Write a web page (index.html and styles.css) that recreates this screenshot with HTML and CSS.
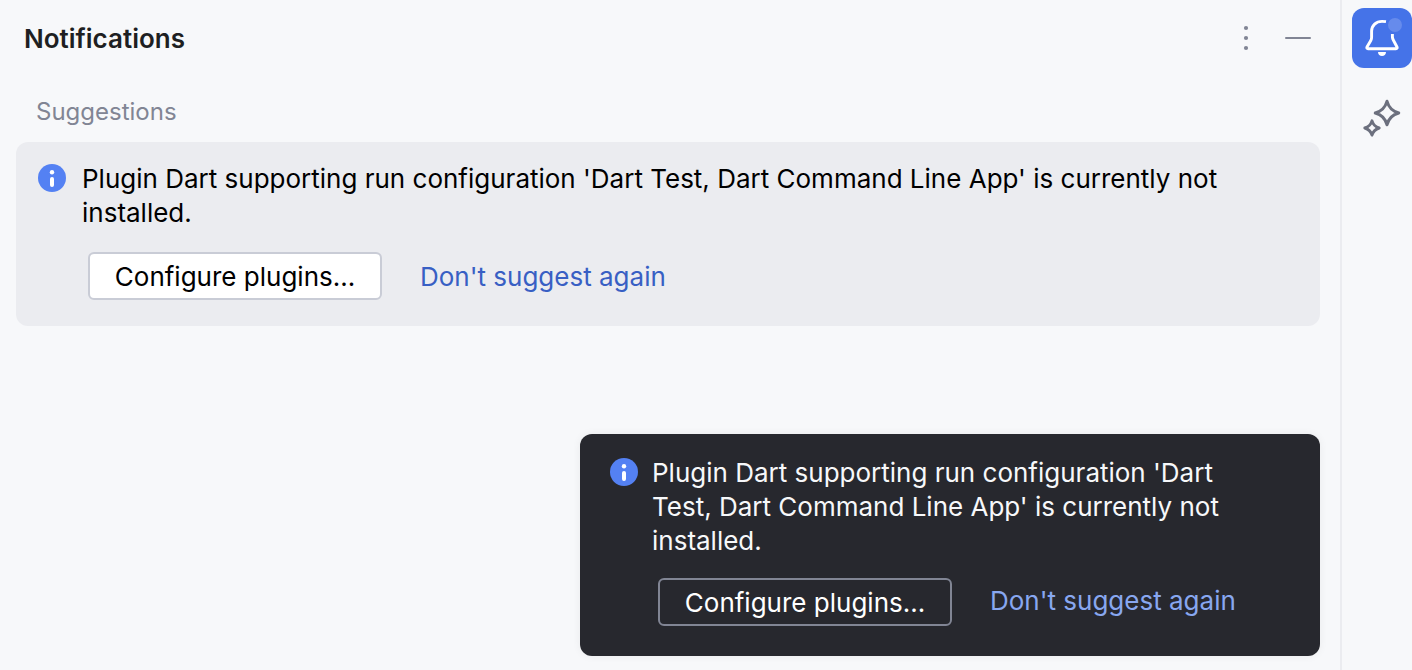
FILE: index.html
```html
<!DOCTYPE html>
<html lang="en">
<head>
    <meta charset="UTF-8">
    <meta name="viewport" content="width=device-width, initial-scale=1.0">
    <title>Notifications</title>
    <link rel="stylesheet" href="styles.css">
</head>
<body>
    <main class="panel">
        <header class="panel-header">
            <h1>Notifications</h1>
            <div class="panel-actions">
                <button type="button" class="icon-btn" aria-label="Options">
                    <svg width="32" height="32" viewBox="0 0 32 32" fill="#818594">
                        <circle cx="16" cy="6" r="2.1"/>
                        <circle cx="16" cy="16" r="2.1"/>
                        <circle cx="16" cy="26" r="2.1"/>
                    </svg>
                </button>
                <button type="button" class="icon-btn" aria-label="Hide">
                    <svg width="32" height="32" viewBox="0 0 32 32" fill="#818594">
                        <rect x="3" y="15" width="26" height="2" rx="1"/>
                    </svg>
                </button>
            </div>
        </header>

        <h2 class="section-title">Suggestions</h2>

        <section class="card">
            <svg class="info-icon" width="28" height="28" viewBox="0 0 28 28">
                <circle cx="14" cy="14" r="14" fill="#5481f3"/>
                <circle cx="14" cy="8.3" r="2.2" fill="#fff"/>
                <rect x="12" y="13" width="4" height="10" rx="2" fill="#fff"/>
            </svg>
            <div class="content">
                <p>Plugin Dart supporting run configuration 'Dart Test, Dart Command Line App' is currently not installed.</p>
                <div class="actions">
                    <button type="button" class="btn">Configure plugins...</button>
                    <a href="#" class="link">Don't suggest again</a>
                </div>
            </div>
        </section>

        <section class="balloon" role="alert">
            <svg class="info-icon" width="28" height="28" viewBox="0 0 28 28">
                <circle cx="14" cy="14" r="14" fill="#5481f3"/>
                <circle cx="14" cy="8.3" r="2.2" fill="#fff"/>
                <rect x="12" y="13" width="4" height="10" rx="2" fill="#fff"/>
            </svg>
            <div class="content">
                <p>Plugin Dart supporting run configuration 'Dart Test, Dart Command Line App' is currently not installed.</p>
                <div class="actions">
                    <button type="button" class="btn">Configure plugins...</button>
                    <a href="#" class="link">Don't suggest again</a>
                </div>
            </div>
        </section>
    </main>

    <nav class="toolbar">
        <button type="button" class="tool-btn active" aria-label="Notifications">
            <svg width="60" height="60" viewBox="0 0 60 60" fill="none">
                <path d="M34 13.6C32.8 13.4 31.5 13.4 30 13.4C24 13.4 19.8 17.4 19.6 23V29.5C19.6 30.6 19.3 31.6 18.8 32.6L15 39C14.5 40 15 40.7 16 40.7H44C45 40.7 45.5 40 45 39L41.3 32C40.7 31 40.5 30 40.4 29V26" stroke="#fff" stroke-width="2.9"/>
                <path d="M26 44H34C34 46.4 32.2 48 30 48C27.8 48 26 46.4 26 44Z" fill="#fff"/>
                <circle cx="43" cy="17" r="7" fill="#668bec"/>
            </svg>
        </button>
        <button type="button" class="tool-btn" aria-label="AI Assistant">
            <svg width="60" height="60" viewBox="0 0 60 60" fill="none" stroke="#6c707e" stroke-width="2.9" stroke-linejoin="round">
                <path d="M35 13.2C36.6 19.4 40.6 23.4 46.8 25C40.6 26.6 36.6 30.6 35 36.8C33.4 30.6 29.4 26.6 23.2 25C29.4 23.4 33.4 19.4 35 13.2Z"/>
                <path d="M20 32.8C21.2 36.8 23.2 38.8 27.2 40C23.2 41.2 21.2 43.2 20 47.2C18.8 43.2 16.8 41.2 12.8 40C16.8 38.8 18.8 36.8 20 32.8Z"/>
            </svg>
        </button>
    </nav>
</body>
</html>
```

FILE: styles.css
```css
:root {
    --bg: #f7f8fa;
    --border: #ebecf0;
    --card: #ebecf0;
    --balloon: #27282e;
    --accent: #4573e8;
    --link: #385fc4;
    --muted: #818594;
}
* {
    box-sizing: border-box;
}
body {
    margin: 0;
    min-height: 100vh;
    display: flex;
    background: var(--bg);
    color: #000;
    font-family: Inter, "Liberation Sans", sans-serif;
    font-size: 26px;
    line-height: 34px;
}
.panel {
    flex: 1;
    position: relative;
    padding: 0 20px 0 16px;
}
.panel-header {
    display: flex;
    justify-content: space-between;
    align-items: center;
    height: 76px;
    padding: 0 6px 0 8px;
}
h1 {
    margin: 0;
    padding-top: 2px;
    color: #1e1f22;
    font-size: 26px;
    font-weight: 600;
}
.panel-actions {
    display: flex;
    gap: 20px;
}
.icon-btn {
    display: flex;
    padding: 0;
    border: none;
    background: none;
    cursor: pointer;
}
.section-title {
    margin: 19px 0 13px;
    padding-left: 20px;
    color: var(--muted);
    font-size: 24px;
    font-weight: 400;
}
.card {
    display: flex;
    gap: 16px;
    padding: 20px 22px 26px;
    border-radius: 12px;
    background: var(--card);
}
.info-icon {
    flex: none;
    margin-top: 2px;
}
.content {
    flex: 1;
}
.content p {
    margin: 0;
}
.actions {
    display: flex;
    align-items: center;
    gap: 38px;
    margin-top: 22px;
    padding-left: 6px;
}
.btn {
    width: 294px;
    height: 48px;
    padding: 2px 0 0;
    border: 2px solid #c9ccd6;
    border-radius: 6px;
    background: #fff;
    color: #000;
    font: inherit;
    cursor: pointer;
}
.link {
    padding-top: 2px;
    color: var(--link);
    text-decoration: none;
}
/* popup over the panel */
.balloon {
    position: absolute;
    right: 20px;
    bottom: 14px;
    display: flex;
    gap: 14px;
    width: 740px;
    padding: 22px 80px 30px 30px;
    border-radius: 12px;
    background: var(--balloon);
    color: #f7f8fa;
    box-shadow: 0 0 8px rgba(0, 0, 0, 0.06);
}
.balloon .actions {
    margin-top: 20px;
}
.balloon .btn {
    border-color: #818594;
    background: none;
    color: #fff;
}
.balloon .link {
    padding: 0 0 2px;
    color: #88a7f0;
}
.toolbar {
    display: flex;
    flex-direction: column;
    gap: 20px;
    padding: 8px 0 0 10px;
    border-left: 2px solid var(--border);
}
.tool-btn {
    width: 60px;
    height: 60px;
    padding: 0;
    border: none;
    border-radius: 12px;
    background: none;
    cursor: pointer;
}
.tool-btn.active {
    background: var(--accent);
}
.tool-btn svg {
    display: block;
}
```
